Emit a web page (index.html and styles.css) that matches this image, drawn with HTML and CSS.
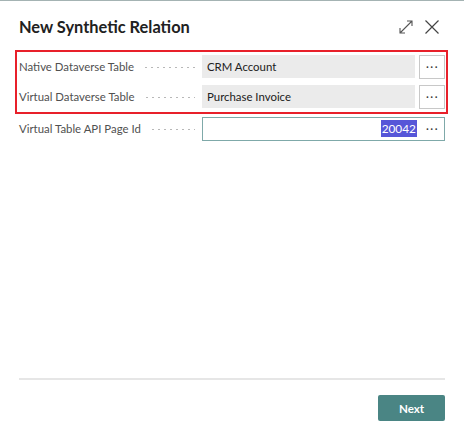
FILE: index.html
```html
<!DOCTYPE html>
<html>
<head>
<meta charset="utf-8">
<link rel="stylesheet" href="styles.css">
</head>
<body>
<div class="dialog">
  <div class="header">
    <h1 class="title">New Synthetic Relation</h1>
    <div class="header-actions">
      <svg class="icon" width="16" height="16" viewBox="0 0 16 16" fill="none" stroke="#555" stroke-width="1.1">
        <path d="M2 14 L14 2 M9 2 H14 V7 M2 9 V14 H7"/>
      </svg>
      <svg class="icon" width="16" height="16" viewBox="0 0 16 16" fill="none" stroke="#444" stroke-width="1.2">
        <path d="M1.5 1.5 L14.5 14.5 M14.5 1.5 L1.5 14.5"/>
      </svg>
    </div>
  </div>
  <div class="highlight">
    <div class="row">
      <div class="label"><span>Native Dataverse Table</span><span class="leader"></span></div>
      <div class="field">CRM Account</div>
      <div class="more-btn">···</div>
    </div>
    <div class="row">
      <div class="label"><span>Virtual Dataverse Table</span><span class="leader"></span></div>
      <div class="field">Purchase Invoice</div>
      <div class="more-btn">···</div>
    </div>
  </div>
  <div class="row row-plain">
    <div class="label"><span>Virtual Table API Page Id</span><span class="leader"></span></div>
    <div class="field-edit"><span class="sel">20042</span><span class="edit-more">···</span></div>
  </div>
  <div class="spacer"></div>
  <div class="footer">
    <button class="next">Next</button>
  </div>
</div>
</body>
</html>
```
FILE: styles.css
```css
html, body {
  margin: 0;
  padding: 0;
  background: #fff;
}
body {
  font-family: "Lato", "Noto Sans", sans-serif;
  width: 464px;
  height: 440px;
  overflow: hidden;
}
.dialog {
  box-sizing: border-box;
  height: 440px;
  border-top: 1px solid #a4b3b3;
  display: flex;
  flex-direction: column;
  padding: 0 16px 0 15px;
}
.header {
  height: 49px;
  display: flex;
  align-items: center;
  justify-content: space-between;
  padding-left: 4px;
}
.title {
  margin: 0;
  font-size: 16.4px;
  font-weight: 700;
  color: #212121;
  position: relative;
  top: 1px;
}
.header-actions {
  display: flex;
  gap: 10px;
  align-items: center;
  padding-right: 8px;
  position: relative;
  top: 1px;
}
.icon { display: block; }
.highlight {
  border: 2px solid #e8202a;
  padding: 3px 1px 4px 2px;
  display: flex;
  flex-direction: column;
  gap: 7px;
}
.row {
  display: flex;
  align-items: center;
  height: 23px;
}
.row-plain {
  margin-top: 3px;
  padding-left: 4px;
  padding-right: 3px;
}
.label {
  width: 183px;
  flex: none;
  display: flex;
  align-items: center;
  font-size: 11.4px;
  color: #505050;
  white-space: nowrap;
}
.leader {
  flex: 1;
  height: 3px;
  margin: 2px 7px 0 9px;
  background-image: radial-gradient(circle, #b8b8b8 0.7px, transparent 1px);
  background-size: 6px 3px;
  background-repeat: repeat-x;
}
.field {
  flex: 1;
  height: 23px;
  background: #ebebeb;
  font-size: 11.4px;
  color: #212121;
  line-height: 23px;
  padding-left: 5px;
}
.more-btn {
  width: 23px;
  height: 22px;
  margin-left: 4px;
  border: 1px solid #c8c8c8;
  background: #fff;
  display: flex;
  align-items: center;
  justify-content: center;
  font-size: 11px;
  color: #333;
  font-weight: 400;
  letter-spacing: 1.5px;
  padding-left: 1px;
}
.field-edit {
  flex: 1;
  box-sizing: border-box;
  height: 24px;
  border: 1px solid #7fa9a9;
  display: flex;
  align-items: center;
  justify-content: flex-end;
  font-size: 11.8px;
  color: #fff;
  padding-right: 5px;
}
.sel {
  background: #5656d8;
  color: #fff;
  line-height: 17px;
  padding: 0 1px;
}
.edit-more {
  color: #333;
  font-weight: 400;
  font-size: 11px;
  letter-spacing: 1.5px;
  margin-left: 9px;
}
.spacer { flex: 1; }
.footer {
  border-top: 2px solid #e6e6e6;
  margin-left: 4px;
  margin-right: 3px;
  padding-top: 15px;
  padding-bottom: 19px;
  display: flex;
  justify-content: flex-end;
}
.next {
  width: 67px;
  height: 26px;
  border: none;
  border-radius: 2px;
  background: #4a8584;
  color: #fff;
  font-family: "Lato", sans-serif;
  font-weight: 700;
  font-size: 11.6px;
}
```
